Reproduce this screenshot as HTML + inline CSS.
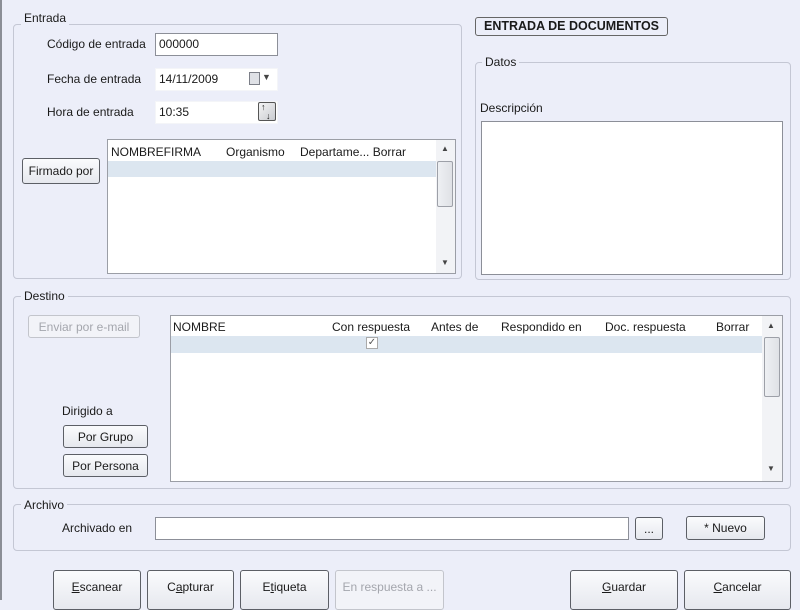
<!DOCTYPE html>
<html><head><meta charset="utf-8"><style>
*{box-sizing:border-box;margin:0;padding:0}
body{width:800px;height:600px;background:#eceef9;font-family:"Liberation Sans",sans-serif;font-size:12px;color:#1a1a1a;position:relative;overflow:hidden}
.a{position:absolute}
.grp{position:absolute;border:1px solid #c4c7d4;border-radius:4px}
.lg{position:absolute;background:#eceef9;padding:0 3px;font-size:12px}
.in{position:absolute;background:#fff;border:1px solid #8c8f98;padding:3px 3px;font-size:12px}
.btn{position:absolute;border:1px solid #5c5f66;border-radius:3px;background:linear-gradient(#fafbfd,#e6e8ee);text-align:center;font-size:12px;display:flex;align-items:center;justify-content:center}
.dis{border-color:#c3c5cc;color:#a4a6ad;background:#f2f3f8}
.tbl{position:absolute;background:#fff;border:1px solid #9b9ea6}
.hd{position:absolute;font-size:12px}
.sb{position:absolute;background:#f2f3f6}
.thumb{position:absolute;border:1px solid #9da0a8;border-radius:2px;background:linear-gradient(90deg,#eef0f3,#dfe1e6)}
</style></head><body>
<div class="a" style="left:0;top:0;width:2px;height:600px;background:#8b8e96"></div>

<!-- Entrada -->
<div class="grp" style="left:13px;top:24px;width:449px;height:255px"></div>
<div class="lg" style="left:21px;top:11px">Entrada</div>
<div class="a" style="left:47px;top:37px">Código de entrada</div>
<div class="in" style="left:155px;top:33px;width:123px;height:23px">000000</div>
<div class="a" style="left:47px;top:72px">Fecha de entrada</div>
<div class="in" style="left:155px;top:68px;width:123px;height:23px;border-color:#f4f5f8">14/11/2009</div>
<div class="a" style="left:249px;top:72px;width:11px;height:13px;border:1px solid #7c7f88;background:#dfe1e6"></div>
<div class="a" style="left:262px;top:72px;font-size:9px;color:#444">▼</div>
<div class="a" style="left:47px;top:105px">Hora de entrada</div>
<div class="in" style="left:155px;top:101px;width:123px;height:23px;border-color:#f4f5f8">10:35</div>
<div class="a" style="left:258px;top:102px;width:18px;height:19px;border:1px solid #555;border-radius:2px;background:linear-gradient(135deg,#f4f4f4,#c9cbd0);font-size:9px;line-height:9px;padding-left:2px">↑<br>&nbsp;&nbsp;↓</div>

<div class="btn" style="left:22px;top:158px;width:78px;height:26px">Firmado por</div>
<div class="tbl" style="left:107px;top:139px;width:349px;height:135px">
 <div class="hd" style="left:3px;top:5px">NOMBREFIRMA</div>
 <div class="hd" style="left:118px;top:5px">Organismo</div>
 <div class="hd" style="left:192px;top:5px">Departame... Borrar</div>
 <div class="a" style="left:0;top:21px;width:328px;height:16px;background:#dce6f0"></div>
 <div class="sb" style="left:328px;top:0;width:19px;height:133px"></div>
 <div class="a" style="left:333px;top:4px;font-size:8px;color:#444">▲</div>
 <div class="thumb" style="left:329px;top:21px;width:16px;height:46px"></div>
 <div class="a" style="left:333px;top:118px;font-size:8px;color:#444">▼</div>
</div>

<!-- Right -->
<div class="a" style="left:475px;top:17px;width:193px;height:19px;border:1px solid #666;border-radius:3px;font-weight:bold;font-size:12.5px;padding:1px 0 0 8px">ENTRADA DE DOCUMENTOS</div>
<div class="grp" style="left:475px;top:62px;width:316px;height:218px"></div>
<div class="lg" style="left:482px;top:55px">Datos</div>
<div class="a" style="left:480px;top:101px">Descripción</div>
<div class="a" style="left:481px;top:121px;width:302px;height:154px;background:#fff;border:1px solid #8c8f98"></div>

<!-- Destino -->
<div class="grp" style="left:13px;top:296px;width:778px;height:193px"></div>
<div class="lg" style="left:21px;top:289px">Destino</div>
<div class="btn dis" style="left:28px;top:315px;width:112px;height:23px">Enviar por e-mail</div>
<div class="a" style="left:62px;top:404px">Dirigido a</div>
<div class="btn" style="left:63px;top:425px;width:85px;height:23px">Por Grupo</div>
<div class="btn" style="left:63px;top:454px;width:85px;height:23px">Por Persona</div>
<div class="tbl" style="left:170px;top:315px;width:613px;height:167px">
 <div class="hd" style="left:2px;top:4px">NOMBRE</div>
 <div class="hd" style="left:161px;top:4px">Con respuesta</div>
 <div class="hd" style="left:260px;top:4px">Antes de</div>
 <div class="hd" style="left:330px;top:4px">Respondido en</div>
 <div class="hd" style="left:434px;top:4px">Doc. respuesta</div>
 <div class="hd" style="left:545px;top:4px">Borrar</div>
 <div class="a" style="left:0;top:20px;width:591px;height:17px;background:#dce6f0"></div>
 <div class="a" style="left:195px;top:21px;width:12px;height:12px;border:1px solid #aaa;background:#fff;font-size:10px;line-height:10px;text-align:center;color:#555">✓</div>
 <div class="sb" style="left:591px;top:0;width:20px;height:165px"></div>
 <div class="a" style="left:596px;top:5px;font-size:8px;color:#444">▲</div>
 <div class="thumb" style="left:593px;top:21px;width:16px;height:60px"></div>
 <div class="a" style="left:596px;top:148px;font-size:8px;color:#444">▼</div>
</div>

<!-- Archivo -->
<div class="grp" style="left:13px;top:504px;width:778px;height:47px"></div>
<div class="lg" style="left:21px;top:498px">Archivo</div>
<div class="a" style="left:62px;top:521px">Archivado en</div>
<div class="in" style="left:155px;top:517px;width:474px;height:23px"></div>
<div class="btn" style="left:635px;top:517px;width:28px;height:23px;border-radius:3px">...</div>
<div class="btn" style="left:686px;top:516px;width:79px;height:24px">* Nuevo</div>

<!-- Bottom -->
<div class="btn" style="left:53px;top:570px;width:88px;height:40px;align-items:flex-start;padding-top:9px"><u>E</u>scanear</div>
<div class="btn" style="left:147px;top:570px;width:87px;height:40px;align-items:flex-start;padding-top:9px">C<u>a</u>pturar</div>
<div class="btn" style="left:240px;top:570px;width:89px;height:40px;align-items:flex-start;padding-top:9px">E<u>t</u>iqueta</div>
<div class="btn dis" style="left:335px;top:570px;width:109px;height:40px;align-items:flex-start;padding-top:9px">En respuesta a ...</div>
<div class="btn" style="left:570px;top:570px;width:108px;height:40px;align-items:flex-start;padding-top:9px"><u>G</u>uardar</div>
<div class="btn" style="left:684px;top:570px;width:107px;height:40px;align-items:flex-start;padding-top:9px"><u>C</u>ancelar</div>
</body></html>
